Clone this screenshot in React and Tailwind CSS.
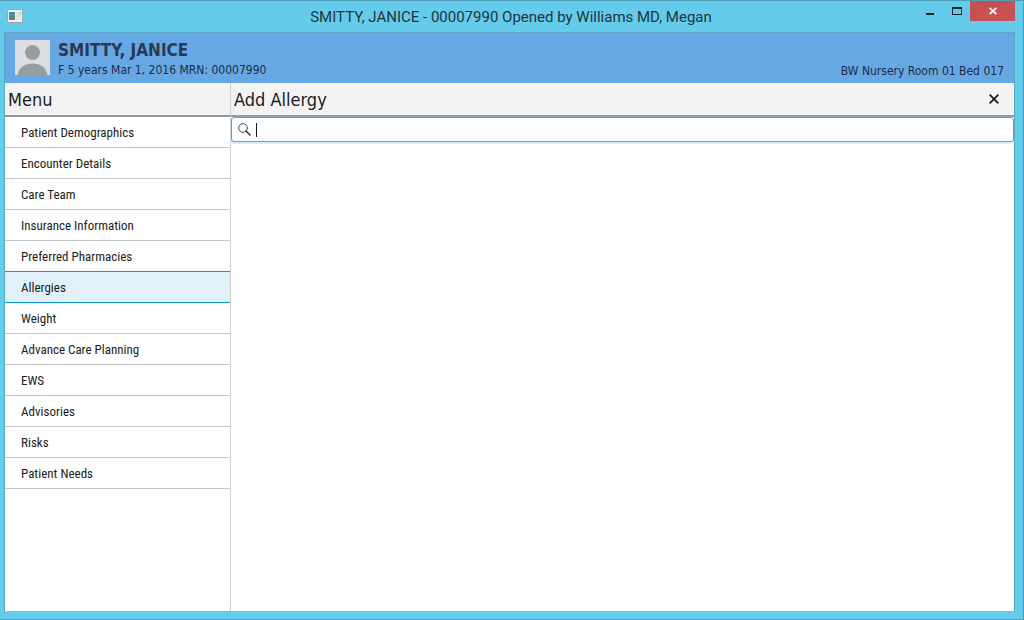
import React, { useState } from "react";

const MENU = [
  "Patient Demographics",
  "Encounter Details",
  "Care Team",
  "Insurance Information",
  "Preferred Pharmacies",
  "Allergies",
  "Weight",
  "Advance Care Planning",
  "EWS",
  "Advisories",
  "Risks",
  "Patient Needs",
];

function AppIcon() {
  return (
    <svg width="16" height="14" viewBox="0 0 16 14" aria-hidden="true">
      <rect x="0.5" y="0.5" width="15" height="13" rx="1" fill="#eef1f2" stroke="#98a5ab" />
      <rect x="2" y="3" width="6" height="8" fill="#5b8f9c" />
      <path d="M2 3h4v2H2z" fill="#4a7fae" />
      <path d="M2 8l3-2 3 3v2H2z" fill="#558876" />
      <rect x="9" y="3" width="5" height="8" fill="#dfe4e6" />
      <path d="M12 3h2v3h-2z" fill="#c2d6c8" />
    </svg>
  );
}

function Avatar() {
  return (
    <svg width="35" height="35" viewBox="0 0 35 35" role="img" aria-label="Patient photo">
      <rect width="35" height="35" fill="#dcdee2" />
      <circle cx="17.5" cy="12.5" r="7.5" fill="#979da1" />
      <path d="M2.5 35C4 27 10 23.5 17.5 23.5S31 27 32.5 35z" fill="#979da1" />
    </svg>
  );
}

function TitleBar() {
  return (
    <div className="grid h-8 shrink-0 grid-cols-[1fr_auto_1fr] items-start border-t border-[#4e9dbb] pr-2 pl-[7px]">
      <div className="pt-2">
        <AppIcon />
      </div>
      <h1 className="pt-1 font-['Roboto',sans-serif] text-[15px] leading-6 text-[#1c3440]">
        SMITTY, JANICE - 00007990 Opened by Williams MD, Megan
      </h1>
      <div className="flex justify-end">
        <button type="button" aria-label="Minimize" className="flex h-5 w-7 items-center justify-center">
          <svg width="12" height="10" viewBox="0 0 12 10">
            <rect x="2" y="7" width="8" height="2" fill="#1b2227" />
          </svg>
        </button>
        <button type="button" aria-label="Maximize" className="flex h-5 w-[26px] items-center justify-center">
          <svg width="10" height="8" viewBox="0 0 10 8">
            <path d="M0 0h10v8H0zM1 2v5h8V2z" fill="#1b2227" fillRule="evenodd" />
          </svg>
        </button>
        <button type="button" aria-label="Close window" className="flex h-5 w-[45px] items-center justify-center bg-[#c75050]">
          <svg width="8" height="8" viewBox="0 0 8 8">
            <path d="M0.6 0.8l6.8 6.4M7.4 0.8L0.6 7.2" stroke="#fff" strokeWidth="1.7" />
          </svg>
        </button>
      </div>
    </div>
  );
}

function PatientBanner() {
  return (
    <header className="flex h-[50px] shrink-0 items-end bg-[#67a8e4] px-[10px] font-['DejaVu_Sans_Condensed','DejaVu_Sans',sans-serif] text-[#1d2b45]">
      <div className="pb-2">
        <Avatar />
      </div>
      <div className="flex-1 pb-1 pl-2">
        <div className="text-[17px] leading-[22px] font-bold text-[#2a3a55]">SMITTY, JANICE</div>
        <div className="text-[12px] leading-[18px]">F 5 years Mar 1, 2016 MRN: 00007990</div>
      </div>
      <div className="pb-1 text-[12px] leading-4">BW Nursery Room 01 Bed 017</div>
    </header>
  );
}

export default function App() {
  const [selected, setSelected] = useState("Allergies");
  const [query, setQuery] = useState("");

  return (
    <div className="flex min-h-screen flex-col border-r border-b border-[#4e9dbb] bg-[#65cbea]">
      <TitleBar />
      <main className="mr-2 mb-2 ml-1 flex flex-1 flex-col border-x border-t border-[#55a9c4] bg-white">
        <PatientBanner />
        <div className="flex flex-1">
          <nav className="w-[226px] shrink-0 border-r border-[#cfd0d2]">
            <h2 className="h-[34px] border-b-2 border-[#969a9d] bg-[#f3f3f3] px-[3px] font-['DejaVu_Sans_Condensed','DejaVu_Sans',sans-serif] text-[18px] leading-[34px] text-[#1a1c22]">
              Menu
            </h2>
            <ul>
              {MENU.map((item) => (
                <li key={item}>
                  <button
                    type="button"
                    onClick={() => setSelected(item)}
                    className={
                      "block h-[31px] w-full border-b px-4 pt-0.5 text-left font-['Roboto_Condensed','Lato',sans-serif] text-[13px] leading-7 text-[#1b1d22] " +
                      (item === selected
                        ? "border-[#0d97de] bg-[#e0f1fb] shadow-[0_-1px_0_#0d97de]"
                        : "border-[#c6c7c9] bg-white")
                    }
                  >
                    {item}
                  </button>
                </li>
              ))}
            </ul>
          </nav>
          <section className="flex-1">
            <div className="flex h-[34px] items-start justify-between border-b-2 border-[#8ba0ad] bg-[#f3f3f3] pr-[15px] pl-[3px]">
              <h2 className="font-['DejaVu_Sans_Condensed','DejaVu_Sans',sans-serif] text-[18px] leading-[34px] text-[#1a1c22]">
                Add Allergy
              </h2>
              <button type="button" aria-label="Close" className="self-center">
                <svg width="10" height="10" viewBox="0 0 10 10">
                  <path d="M0.7 0.7l8.6 8.6M9.3 0.7L0.7 9.3" stroke="#1b1d20" strokeWidth="1.8" />
                </svg>
              </button>
            </div>
            <label className="flex h-[25px] items-center rounded-[3px] border border-[#3fa9e0] bg-white pl-[6px] shadow-[0_2px_0_#d5edf8]">
              <svg width="13" height="13" viewBox="0 0 13 13" aria-hidden="true">
                <circle cx="5" cy="5" r="4.3" fill="none" stroke="#44474c" strokeWidth="1" />
                <path d="M8 8l4 4" stroke="#2b2e33" strokeWidth="1.5" strokeLinecap="round" />
              </svg>
              <span className="ml-[5px] h-[14px] w-px bg-[#15171a]" />
              <input
                type="text"
                aria-label="Search allergies"
                value={query}
                onChange={(e) => setQuery(e.target.value)}
                className="h-full min-w-0 flex-1 bg-transparent font-['Open_Sans',sans-serif] text-[12px] caret-transparent outline-none"
              />
            </label>
          </section>
        </div>
      </main>
    </div>
  );
}
